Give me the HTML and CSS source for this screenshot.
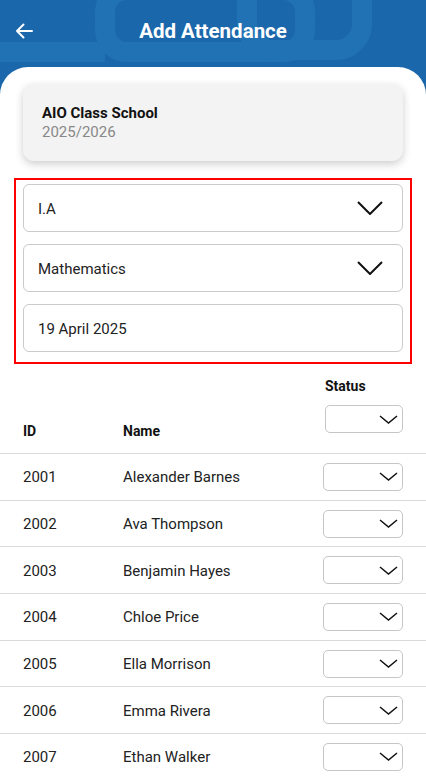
FILE: index.html
```html
<!DOCTYPE html>
<html lang="en">
<head>
  <meta charset="UTF-8" />
  <meta name="viewport" content="width=device-width, initial-scale=1" />
  <title>Add Attendance</title>
  <link rel="stylesheet" href="styles.css">
</head>
<body>
<div class="app">
  <!-- Top bar with faint pattern -->
  <div class="topbar">
    <svg class="topbar-pattern" width="426" height="67" viewBox="0 0 426 67">
      <path d="M-10 52H105" />
      <rect x="105" y="-10" width="200" height="62" rx="22" />
      <rect x="247" y="-30" width="115" height="80" rx="26" />
    </svg>
    <button class="back-btn" aria-label="Back">
      <svg width="18" height="16" viewBox="0 0 18 16"><path d="M17 8H2M8.5 1.5L2 8l6.5 6.5" /></svg>
    </button>
    <div class="topbar-title">Add Attendance</div>
  </div>

  <div class="sheet">
    <div class="school-card">
      <div class="school-name">AIO Class School</div>
      <div class="school-year">2025/2026</div>
    </div>

    <!-- Filters -->
    <div class="filter-box">
      <div class="field">
        <span>I.A</span>
        <svg class="chev-lg" width="26" height="14" viewBox="0 0 26 14"><polyline points="1,1 13,13 25,1" /></svg>
      </div>
      <div class="field">
        <span>Mathematics</span>
        <svg class="chev-lg" width="26" height="14" viewBox="0 0 26 14"><polyline points="1,1 13,13 25,1" /></svg>
      </div>
      <div class="field">
        <span>19 April 2025</span>
      </div>
    </div>

    <!-- Attendance table -->
    <div class="table">
      <div class="thead">
        <div class="col-id">ID</div>
        <div class="col-name">Name</div>
        <div class="col-status">
          <div class="status-label">Status</div>
          <div class="status-select head-select">
            <svg width="19" height="9" viewBox="0 0 19 9"><polyline points="1,1 9.5,8 18,1" /></svg>
          </div>
        </div>
      </div>

      <div class="trow">
        <div class="col-id">2001</div>
        <div class="col-name">Alexander Barnes</div>
        <div class="status-select"><svg width="19" height="9" viewBox="0 0 19 9"><polyline points="1,1 9.5,8 18,1" /></svg></div>
      </div>
      <div class="trow">
        <div class="col-id">2002</div>
        <div class="col-name">Ava Thompson</div>
        <div class="status-select"><svg width="19" height="9" viewBox="0 0 19 9"><polyline points="1,1 9.5,8 18,1" /></svg></div>
      </div>
      <div class="trow">
        <div class="col-id">2003</div>
        <div class="col-name">Benjamin Hayes</div>
        <div class="status-select"><svg width="19" height="9" viewBox="0 0 19 9"><polyline points="1,1 9.5,8 18,1" /></svg></div>
      </div>
      <div class="trow">
        <div class="col-id">2004</div>
        <div class="col-name">Chloe Price</div>
        <div class="status-select"><svg width="19" height="9" viewBox="0 0 19 9"><polyline points="1,1 9.5,8 18,1" /></svg></div>
      </div>
      <div class="trow">
        <div class="col-id">2005</div>
        <div class="col-name">Ella Morrison</div>
        <div class="status-select"><svg width="19" height="9" viewBox="0 0 19 9"><polyline points="1,1 9.5,8 18,1" /></svg></div>
      </div>
      <div class="trow">
        <div class="col-id">2006</div>
        <div class="col-name">Emma Rivera</div>
        <div class="status-select"><svg width="19" height="9" viewBox="0 0 19 9"><polyline points="1,1 9.5,8 18,1" /></svg></div>
      </div>
      <div class="trow">
        <div class="col-id">2007</div>
        <div class="col-name">Ethan Walker</div>
        <div class="status-select"><svg width="19" height="9" viewBox="0 0 19 9"><polyline points="1,1 9.5,8 18,1" /></svg></div>
      </div>
    </div>
  </div>
</div>
</body>
</html>
```

FILE: styles.css
```css
body, html {
  margin: 0;
  padding: 0;
  background: #fff;
  font-family: Roboto, 'Liberation Sans', sans-serif;
  color: #222;
}
.app {
  background: #1b67ab;
  height: 780px;
  overflow: hidden;
}
.topbar {
  position: relative;
  height: 62px;
  padding-bottom: 5px;
  display: flex;
  align-items: center;
  justify-content: center;
}
.topbar-pattern {
  position: absolute;
  left: 0;
  top: 0;
}
.topbar-pattern path,
.topbar-pattern rect {
  fill: none;
  stroke: #2072b5;
  stroke-width: 20;
}
.back-btn {
  position: absolute;
  left: 15px;
  top: 23px;
  padding: 0;
  border: none;
  background: none;
  line-height: 0;
}
.back-btn path {
  fill: none;
  stroke: #fff;
  stroke-width: 2;
  stroke-linecap: round;
  stroke-linejoin: round;
}
.topbar-title {
  position: relative;
  color: #fff;
  font-size: 20.5px;
  font-weight: 700;
}
.sheet {
  background: #fff;
  border-radius: 28px 28px 0 0;
  height: 713px;
  padding-top: 17px;
  box-sizing: border-box;
}
.school-card {
  margin: 0 23px;
  padding: 19px;
  background: #f3f3f3;
  border-radius: 11px;
  box-shadow: 0 3px 8px rgba(0, 0, 0, 0.2);
}
.school-name {
  font-size: 15px;
  font-weight: 700;
  line-height: 20px;
  color: #111;
}
.school-year {
  font-size: 15px;
  line-height: 19px;
  color: #888;
}
.filter-box {
  margin: 17px 14px 0;
  padding: 4px 7px 10px;
  border: 2px solid #f00;
  display: flex;
  flex-direction: column;
  gap: 12px;
}
.field {
  height: 48px;
  box-sizing: border-box;
  border: 1px solid #cbcbcb;
  border-radius: 6px;
  padding: 0 19px 0 14px;
  display: flex;
  align-items: center;
  justify-content: space-between;
  font-size: 15px;
}
.field span {
  padding-top: 2px;
}
.chev-lg polyline {
  fill: none;
  stroke: #111;
  stroke-width: 2;
}
.thead {
  display: flex;
  align-items: flex-end;
  padding: 14px 23px 13px;
  border-bottom: 1px solid #dadada;
  font-size: 14px;
  font-weight: 700;
  color: #111;
  line-height: 17px;
}
.col-id {
  width: 100px;
  flex-shrink: 0;
}
.col-name {
  flex: 1;
}
.col-status {
  width: 78px;
  padding-bottom: 7px;
}
.status-label {
  margin-bottom: 10px;
}
.status-select {
  width: 80px;
  height: 28px;
  box-sizing: border-box;
  border: 1px solid #c6c6c6;
  border-radius: 5px;
  display: flex;
  align-items: center;
  justify-content: flex-end;
  padding-right: 4px;
}
.head-select {
  width: 78px;
}
.status-select polyline {
  fill: none;
  stroke: #111;
  stroke-width: 1.5;
}
.trow {
  height: 46.7px;
  box-sizing: border-box;
  display: flex;
  align-items: center;
  padding: 0 23px;
  border-bottom: 1px solid #dadada;
  font-size: 15px;
  color: #222;
}
.trow .col-id,
.trow .col-name {
  padding-top: 1px;
}
```
